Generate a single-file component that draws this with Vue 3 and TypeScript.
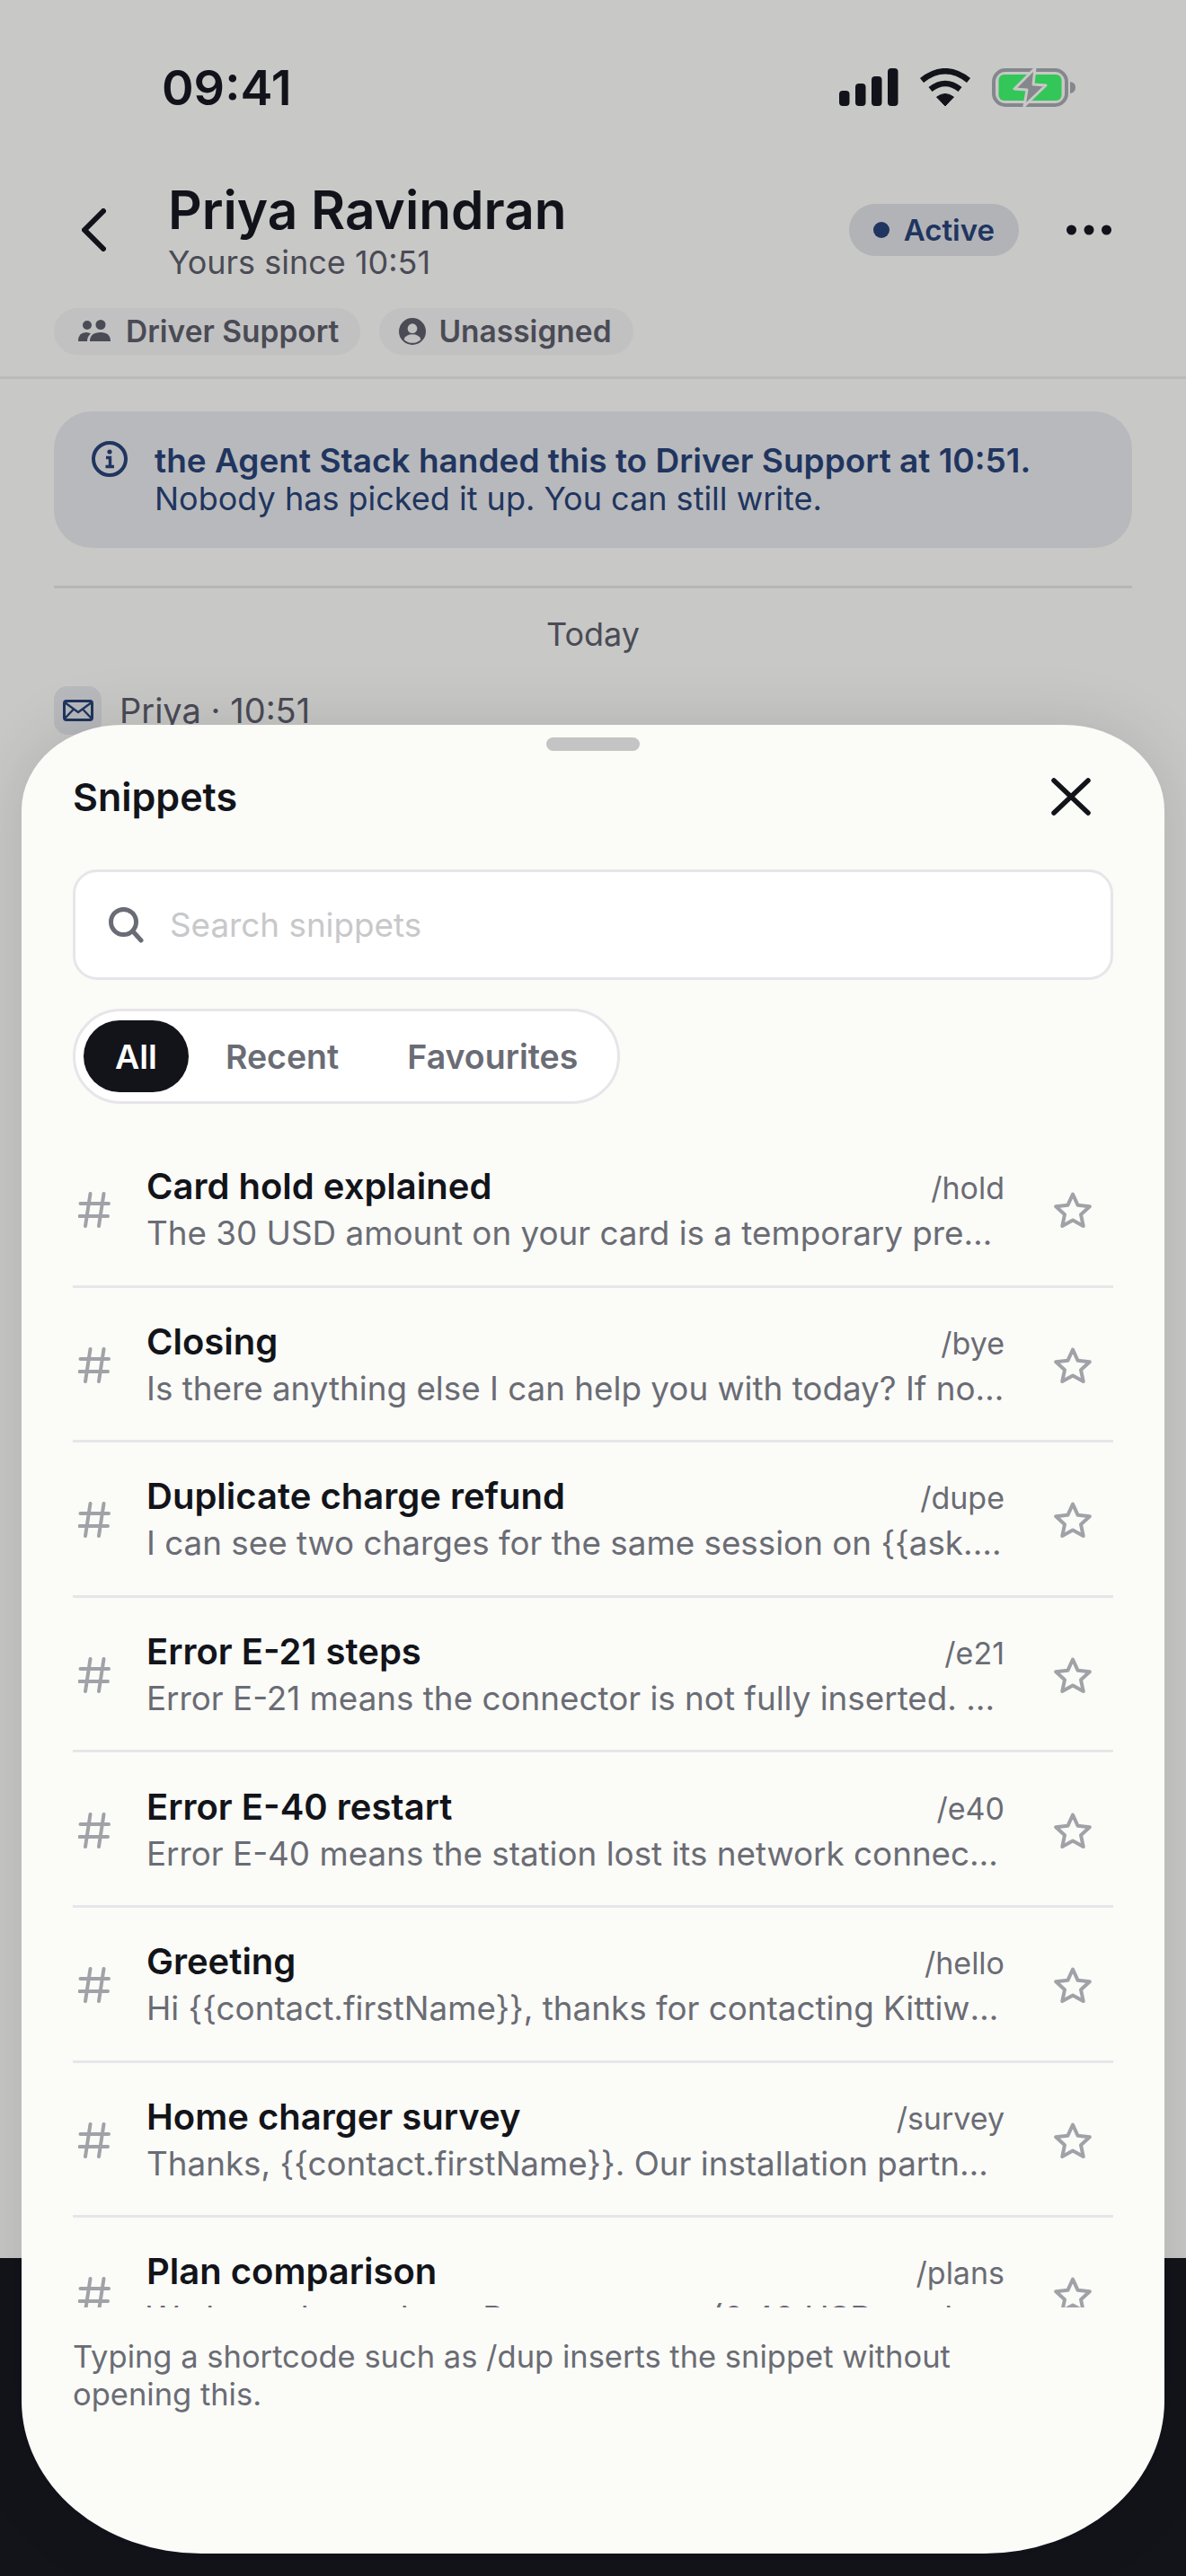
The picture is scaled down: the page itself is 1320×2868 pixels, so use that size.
<script setup lang="ts">
const snippets = [
	{ title: "Card hold explained", code: "/hold", text: "The 30 USD amount on your card is a temporary pre-authorisation that is released after the session." },
	{ title: "Closing", code: "/bye", text: "Is there anything else I can help you with today? If not, thanks for getting in touch." },
	{ title: "Duplicate charge refund", code: "/dupe", text: "I can see two charges for the same session on {{ask.sessionDate}}. I have refunded the second one." },
	{ title: "Error E-21 steps", code: "/e21", text: "Error E-21 means the connector is not fully inserted. Please unplug the cable and try again." },
	{ title: "Error E-40 restart", code: "/e40", text: "Error E-40 means the station lost its network connection. I can restart it from here." },
	{ title: "Greeting", code: "/hello", text: "Hi {{contact.firstName}}, thanks for contacting Kittiwake. How can I help you today?" },
	{ title: "Home charger survey", code: "/survey", text: "Thanks, {{contact.firstName}}. Our installation partner will get in touch about the survey." },
	{ title: "Plan comparison", code: "/plans", text: "We have three plans. Pay as you go (0.40 USD per kWh), and two monthly plans." }
]

const tabs = ["All", "Recent", "Favourites"]
</script>

<template>
	<div class="screen">
		<div class="page">
			<div class="status">
				<span class="clock">09:41</span>
				<div class="status_icons">
					<svg width="66" height="42" viewBox="0 0 66 42" fill="#12141a">
						<rect x="0" y="25" width="11.5" height="17" rx="4" />
						<rect x="18" y="17" width="11.5" height="25" rx="4" />
						<rect x="36" y="9" width="11.5" height="33" rx="4" />
						<rect x="54" y="0" width="11.5" height="42" rx="4" />
					</svg>
					<svg width="58" height="42" viewBox="0 0 58 42" fill="none" stroke="#12141a">
						<path d="M29 42 L19.5 32 Q29 25 38.5 32 Z" fill="#12141a" stroke="#12141a" stroke-width="1" stroke-linejoin="round" />
						<path d="M12.5 23.5 Q29 10.5 45.5 23.5" stroke-width="6.5" />
						<path d="M3 13.5 Q29 -7 55 13.5" stroke-width="6.5" />
					</svg>
					<svg width="94" height="44" viewBox="0 0 94 44">
						<rect x="2" y="3" width="81" height="39" rx="13" fill="none" stroke="#a5a8ac" stroke-width="4" />
						<rect x="7.5" y="8" width="70" height="29" rx="6" fill="#3df96b" />
						<path d="M87 16 Q93 17 93 22 Q93 28 87 29 Z" fill="#a5a8ac" />
						<path d="M48 1 L25 24 L39 25 L36 43 L60 20 L46 19 Z" fill="#a5a8ac" stroke="#fbfbf7" stroke-width="3" stroke-linejoin="round" />
					</svg>
				</div>
			</div>

			<header class="head">
				<div class="head_row">
					<svg class="back" width="27" height="48" viewBox="0 0 27 48" fill="none" stroke="#12141a" stroke-width="6" stroke-linecap="round" stroke-linejoin="round">
						<path d="M24 3 L3 24 L24 45" />
					</svg>
					<div class="who">
						<h1>Priya Ravindran</h1>
						<p>Yours since 10:51</p>
					</div>
					<div class="active"><i></i>Active</div>
					<svg class="more" width="50" height="12" viewBox="0 0 50 12" fill="#12141a">
						<circle cx="5.5" cy="6" r="5.5" />
						<circle cx="25" cy="6" r="5.5" />
						<circle cx="44.5" cy="6" r="5.5" />
					</svg>
				</div>
				<div class="chips">
					<span class="chip">
						<svg width="36" height="26" viewBox="0 0 36 26" fill="#5a5c66">
							<circle cx="10" cy="6" r="5" />
							<circle cx="25" cy="5.5" r="5.5" />
							<path d="M0 24 Q0 14 9 14 Q12 14 14 15.5 Q10 18.5 10 24 Z" />
							<path d="M13 24 Q13 14 25 14 Q36 14 36 24 Z" />
						</svg>
						Driver Support
					</span>
					<span class="chip">
						<svg class="person" width="30" height="30" viewBox="0 0 27 27">
							<circle cx="13.5" cy="13.5" r="13.5" fill="#5a5c66" />
							<circle cx="13.5" cy="10.5" r="4.8" fill="#f3f3f1" />
							<path d="M5 21.5 Q7 16.5 13.5 16.5 Q20 16.5 22 21.5 Q18 25 13.5 25 Q9 25 5 21.5 Z" fill="#f3f3f1" />
						</svg>
						Unassigned
					</span>
				</div>
			</header>

			<div class="banner">
				<svg width="40" height="40" viewBox="0 0 40 40" fill="none" stroke="#243f73" stroke-width="4">
					<circle cx="20" cy="20" r="18" />
					<circle cx="20" cy="12" r="2.6" fill="#243f73" stroke="none" />
					<path d="M16 18.5 H20.5 V28 M15.5 28.5 H25" stroke-width="3.4" />
				</svg>
				<div class="banner_text">
					<strong>the Agent Stack handed this to Driver Support at 10:51.</strong>
					<span>Nobody has picked it up. You can still write.</span>
				</div>
			</div>

			<div class="day">Today</div>

			<div class="msg">
				<span class="msg_icon">
					<svg width="34" height="24" viewBox="0 0 34 24" fill="none" stroke="#243f73" stroke-width="3" stroke-linejoin="round">
						<rect x="1.5" y="1.5" width="31" height="21" rx="2.5" />
						<path d="M2 3 L17 14 L32 3 M2 21 L12 10.5 M32 21 L22 10.5" stroke-width="2.4" />
					</svg>
				</span>
				Priya · 10:51
			</div>

			<div class="dim"></div>
		</div>

		<section class="sheet">
			<div class="handle"></div>
			<div class="sheet_head">
				<h2>Snippets</h2>
				<svg width="44" height="42" viewBox="0 0 44 42" fill="none" stroke="#12141a" stroke-width="5.5" stroke-linecap="round">
					<path d="M3 3 L41 39 M41 3 L3 39" />
				</svg>
			</div>

			<div class="search">
				<svg width="39" height="40" viewBox="0 0 39 40" fill="none" stroke="#6a6c75" stroke-width="5" stroke-linecap="round">
					<circle cx="16.5" cy="16.5" r="14" />
					<path d="M27 27 L36 37" />
				</svg>
				<span>Search snippets</span>
			</div>

			<div class="tabs">
				<span v-for="(tab, i) in tabs" :key="tab" class="tab" :class="{ on: i == 0 }">{{ tab }}</span>
			</div>

			<div class="list">
				<div v-for="s in snippets" :key="s.code" class="row">
					<svg class="hash" width="36" height="40" viewBox="0 0 36 40" fill="none" stroke="#a0a2a8" stroke-width="4" stroke-linecap="round">
						<path d="M13.5 2 L8 38 M28.5 2 L23 38 M2.5 13 H34 M1.5 27 H33" />
					</svg>
					<div class="row_body">
						<div class="row_top">
							<span class="row_title">{{ s.title }}</span>
							<span class="row_code">{{ s.code }}</span>
						</div>
						<p class="row_text">{{ s.text }}</p>
					</div>
					<svg class="star" width="42" height="40" viewBox="0 0 42 40" fill="none" stroke="#a0a2a8" stroke-width="4" stroke-linejoin="round">
						<path d="M21 2.5 L26.6 14.8 L39.8 16.2 L30 25.2 L32.7 38 L21 31.5 L9.3 38 L12 25.2 L2.2 16.2 L15.4 14.8 Z" />
					</svg>
				</div>
			</div>

			<p class="foot">Typing a shortcode such as /dup inserts the snippet without opening this.</p>
		</section>
	</div>
</template>

<style>
body {
	background: #12141a;
}
</style>

<style scoped>
.screen {
	position: relative;
	height: 2868px;
	overflow: hidden;
	font-family: Inter, "Liberation Sans", sans-serif;
	color: #12141a;
}

.page {
	position: relative;
	height: 2514px;
	background: #fbfbf7;
}

.status {
	display: flex;
	justify-content: space-between;
	align-items: center;
	height: 194px;
	margin-bottom: 6px;
	padding: 0 122px 0 180px;
}

.clock {
	font-size: 54px;
	font-weight: 600;
}

.status_icons {
	display: flex;
	align-items: center;
	gap: 23px;
}

.head {
	padding-bottom: 24px;
	border-bottom: 3px solid #ebebe9;
}

.head_row {
	display: flex;
	align-items: center;
	padding: 0 83px 0 91px;
}

.back {
	margin: 0 69px 6px 0;
}

.who {
	flex: 1;
}

.who h1 {
	margin: 0;
	font-size: 58.5px;
	line-height: 68px;
	font-weight: 600;
}

.who p {
	margin: 0;
	font-size: 36px;
	line-height: 49px;
	color: #5a5c66;
}

.active {
	display: flex;
	align-items: center;
	gap: 16px;
	height: 58px;
	margin-bottom: 5px;
	padding: 0 27px;
	border-radius: 29px;
	background: #dfe0e3;
	color: #243f73;
	font-size: 33px;
	font-weight: 600;
}

.active i {
	width: 18px;
	height: 18px;
	border-radius: 50%;
	background: #243f73;
}

.more {
	margin: 0 0 5px 53px;
}

.chips {
	display: flex;
	gap: 21px;
	margin-top: 26px;
	padding-left: 60px;
}

.chip {
	display: flex;
	align-items: center;
	gap: 17px;
	height: 52px;
	padding: 0 24px 0 27px;
	border-radius: 26px;
	background: #f3f3f1;
	color: #5a5c66;
	font-size: 33.5px;
	font-weight: 600;
}

.person {
	margin: 0 -3px 0 -5px;
}

.banner {
	display: flex;
	gap: 30px;
	margin: 36px 60px 0;
	padding: 33px 42px;
	border-radius: 42px;
	background: #e7e8e9;
	color: #243f73;
	font-size: 36px;
	line-height: 43px;
}

.banner_text {
	display: flex;
	flex-direction: column;
}

.banner_text strong {
	font-size: 37px;
	font-weight: 600;
}

.day {
	margin: 42px 60px 0;
	padding-top: 27px;
	border-top: 3px solid #e4e4e6;
	text-align: center;
	font-size: 36px;
	line-height: 48px;
	color: #5a5c66;
}

.msg {
	display: flex;
	align-items: center;
	gap: 20px;
	margin: 34px 60px 0;
	color: #5a5c66;
	font-size: 38px;
}

.msg_icon {
	display: flex;
	align-items: center;
	justify-content: center;
	width: 53px;
	height: 54px;
	border-radius: 15px;
	background: #e7e8e9;
}

.dim {
	position: absolute;
	inset: 0;
	background: rgba(18, 20, 26, 0.22);
}

.sheet {
	position: absolute;
	top: 807px;
	left: 24px;
	right: 24px;
	height: 2036px;
	padding: 14px 57px 0;
	box-sizing: border-box;
	border-radius: 112px 112px 200px 200px / 95px 95px 170px 170px;
	background: #fbfbf7;
	box-shadow: 0 0 72px rgba(18, 20, 26, 0.12);
}

.handle {
	width: 104px;
	height: 15px;
	margin: 0 auto;
	border-radius: 8px;
	background: #c4c4c4;
}

.sheet_head {
	display: flex;
	justify-content: space-between;
	align-items: center;
	margin-top: 24px;
	height: 54px;
	padding-right: 25px;
}

.sheet_head h2 {
	margin: 0;
	font-size: 43px;
	font-weight: 600;
}

.search {
	display: flex;
	align-items: center;
	gap: 29px;
	height: 123px;
	margin-top: 54px;
	padding-left: 37px;
	box-sizing: border-box;
	border: 3px solid #e6e6ea;
	border-radius: 27px;
	background: #fff;
	color: #c8c8ca;
	font-size: 36.8px;
}

.tabs {
	display: inline-flex;
	gap: 6px;
	margin-top: 32px;
	padding: 10px 9px;
	border: 3px solid #e6e6ea;
	border-radius: 53px;
	background: #fff;
	vertical-align: top;
}

.tab {
	display: flex;
	align-items: center;
	height: 80px;
	padding: 0 35px;
	border-radius: 40px;
	color: #6a6c75;
	font-size: 37.5px;
	font-weight: 600;
}

.tab.on {
	background: #12141a;
	color: #fff;
}

.list {
	height: 1308px;
	margin-top: 32px;
	overflow: hidden;
}

.row {
	display: flex;
	align-items: center;
	height: 172.6px;
	box-sizing: border-box;
	padding-top: 3px;
	padding-right: 15px;
	border-bottom: 3px solid #e6e6ea;
}

.hash {
	flex: none;
	margin: 0 40px 0 6px;
}

.row_body {
	flex: 1;
	min-width: 0;
	margin-right: 55px;
}

.row_top {
	display: flex;
	justify-content: space-between;
	align-items: baseline;
}

.row_title {
	font-size: 40px;
	line-height: 52px;
	font-weight: 600;
}

.row_code {
	font-size: 34px;
	color: #6a6c75;
}

.row_text {
	margin: 0;
	font-size: 36.8px;
	line-height: 52px;
	color: #6a6c75;
	white-space: nowrap;
	overflow: hidden;
	text-overflow: ellipsis;
}

.star {
	flex: none;
	margin-right: 9px;
}

.foot {
	margin: 34px 0 0;
	padding-right: 66px;
	font-size: 34.5px;
	line-height: 42px;
	color: #6a6c75;
}
</style>
